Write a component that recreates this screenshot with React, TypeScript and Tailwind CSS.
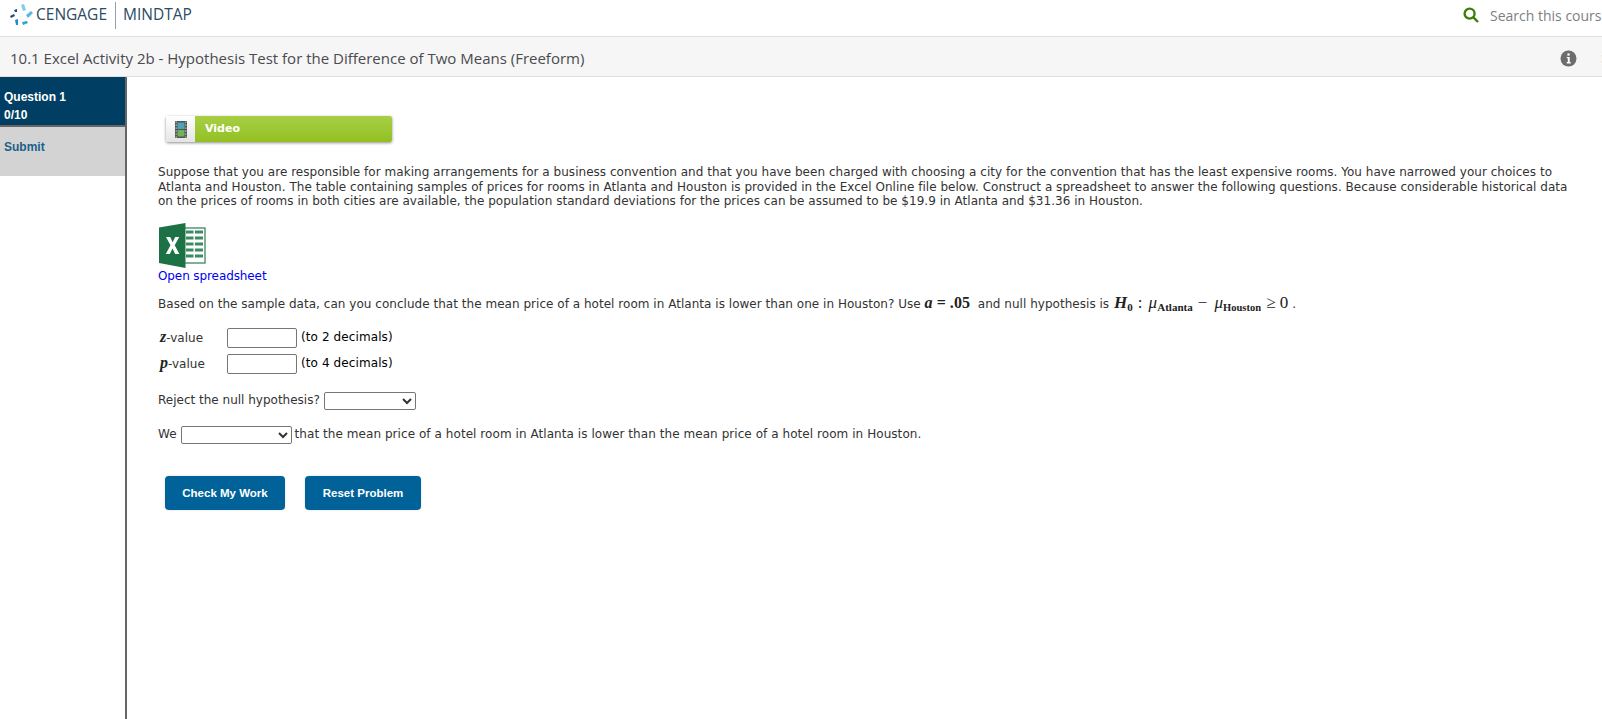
const verdana = "font-['DejaVu_Sans',Verdana,sans-serif]";

function Logo() {
  return (
    <svg width="24" height="22" viewBox="0 0 24 22" className="shrink-0">
      <path d="M11 1l3-1 2 6-3 1z" fill="#7fcdee" />
      <path d="M16 11l5-4 2 2-5 5z" fill="#5ab8e6" />
      <path d="M0 12l4-2 1 2-4 2z" fill="#1c4f77" />
      <path d="M4 6l3-1v3l-2 0z" fill="#1c4f77" />
      <path d="M5 16l3-1v6l-2 0z" fill="#1f8fc9" />
      <path d="M12 18l5-1 1 2-5 2z" fill="#2aa3dc" />
    </svg>
  );
}

function SearchIcon() {
  return (
    <svg width="16" height="16" viewBox="0 0 16 16" fill="none" className="shrink-0">
      <circle cx="6.6" cy="6.6" r="5" stroke="#3f7d0c" strokeWidth="2.4" />
      <path d="M10.4 10.4L15 15" stroke="#3f7d0c" strokeWidth="2.4" />
    </svg>
  );
}

function InfoIcon() {
  return (
    <svg width="17" height="17" viewBox="0 0 17 17" className="shrink-0">
      <circle cx="8.5" cy="8.5" r="8" fill="#6d6d6f" />
      <rect x="7.4" y="3.4" width="2.3" height="2.2" fill="#fff" />
      <path d="M6.8 7h2.9v5h1v1.4H6.8V12h1V8.3h-1z" fill="#fff" />
    </svg>
  );
}

function FilmIcon() {
  return (
    <svg width="12" height="17" viewBox="0 0 12 17">
      <rect x="0" y="0" width="12" height="17" fill="#4f5354" />
      <rect x="2.5" y="1.5" width="7" height="6.5" fill="#4fa3b5" />
      <rect x="2.5" y="9" width="7" height="6.5" fill="#72b455" />
      {[1, 4, 7, 10, 13, 16].map((y) => (
        <g key={y}>
          <rect x="0.6" y={y - 0.5} width="1.2" height="1.2" fill="#cfd4d4" />
          <rect x="10.2" y={y - 0.5} width="1.2" height="1.2" fill="#cfd4d4" />
        </g>
      ))}
    </svg>
  );
}

function ExcelIcon() {
  return (
    <svg width="47" height="45" viewBox="0 0 47 45">
      <rect x="25" y="5" width="21" height="35" fill="#fff" stroke="#2a7d50" strokeWidth="1.2" />
      {[11, 17, 23, 29, 35].map((y) => (
        <rect key={y} x="27" y={y - 3.5} width="17" height="3" fill="#3c8a60" />
      ))}
      <rect x="34.5" y="6" width="1.4" height="33" fill="#fff" />
      <path d="M0 4.5L26.5 0v45L0 40z" fill="#1d7245" />
      <path d="M7 14h4.2l2.5 5.2 2.5-5.2h4l-4.5 8.2 4.7 8.8h-4.2l-2.7-5.5-2.7 5.5H6.8l4.7-8.8z" fill="#fff" />
    </svg>
  );
}

function MathVar({ children }: { children: string }) {
  return <i className="font-['Liberation_Serif',serif] text-[16px] font-bold text-[#222]">{children}</i>;
}

export default function App() {
  return (
    <div className="flex h-[719px] w-[1602px] flex-col overflow-hidden bg-white">
      {/* Top bar */}
      <header className="flex h-[37px] shrink-0 items-center justify-between border-b border-[#dedede] pb-[6px] pl-[10px] font-['Open_Sans',sans-serif]">
        <div className="flex items-center">
          <Logo />
          <span className="ml-[2px] text-[15.5px] text-[#2c4a63]">CENGAGE</span>
          <span className="ml-[8px] mr-[7px] h-[27px] w-px bg-[#8fa0ad]" />
          <span className="text-[15.5px] text-[#2c4a63]">MINDTAP</span>
        </div>
        <div className="flex w-[139px] shrink-0 items-center gap-[11px] overflow-hidden whitespace-nowrap">
          <SearchIcon />
          <span className="text-[14px] text-[#7b7f83]">Search this course</span>
        </div>
      </header>

      {/* Title bar */}
      <div className="flex h-[40px] shrink-0 items-center justify-between overflow-hidden border-b border-[#dedede] bg-[#f6f6f6] pl-[10px] pt-[4px] font-['Open_Sans',sans-serif]">
        <h1 className="text-[15px] font-normal text-[#4a4a4f]">
          10.1 Excel Activity 2b - Hypothesis Test for the Difference of Two Means (Freeform)
        </h1>
        <div className="flex w-[42px] shrink-0 items-center gap-[23px] overflow-hidden">
          <InfoIcon />
          <span className="text-[14px] text-[#555]">✕</span>
        </div>
      </div>

      <div className="flex min-h-0 flex-1">
        {/* Sidebar */}
        <aside className="w-[127px] shrink-0 border-r-2 border-[#666] font-['Liberation_Sans',sans-serif] text-[12px] font-bold">
          <div className="flex h-[50px] flex-col justify-end border-b-2 border-[#666] bg-[#003f63] pb-[1px] pl-[4px] leading-[18px] text-white">
            <div>Question 1</div>
            <div>0/10</div>
          </div>
          <div className="h-[49px] bg-[#d3d3d3] pl-[4px] pt-[11px] text-[#1d5f8a]">Submit</div>
        </aside>

        {/* Question */}
        <main className={`min-w-0 flex-1 pl-[31px] pr-[12px] pt-[39px] text-[12px] leading-[14.5px] text-[#333] ${verdana}`}>
          <div className="ml-[8px] flex h-[26px] w-[226px] items-stretch rounded-[2px] shadow-[0_1px_3px_rgba(0,0,0,0.45)]">
            <div className="flex w-[29px] items-center justify-center bg-gradient-to-b from-white to-[#e4e4e4]">
              <FilmIcon />
            </div>
            <div className="flex flex-1 items-center rounded-r-[2px] bg-gradient-to-b from-[#a8cf45] to-[#93c01f] pl-[10px] text-[11px] font-bold text-white">
              Video
            </div>
          </div>

          <p className="mt-[23px] pr-[18px] tracking-[0.03px]">
            Suppose that you are responsible for making arrangements for a business convention and that you have been charged with choosing a city for the convention that has the least expensive rooms. You have narrowed your choices to Atlanta and Houston. The table containing samples of prices for rooms in Atlanta and Houston is provided in the Excel Online file below. Construct a spreadsheet to answer the following questions. Because considerable historical data on the prices of rooms in both cities are available, the population standard deviations for the prices can be assumed to be $19.9 in Atlanta and $31.36 in Houston.
          </p>

          <div className="ml-[1px] mt-[14px]">
            <ExcelIcon />
          </div>
          <a className="mt-[1px] block text-[#0000ee] tracking-[-0.1px]">Open spreadsheet</a>

          <p className="mt-[13px] flex items-baseline whitespace-pre tracking-[0.03px]">
            Based on the sample data, can you conclude that the mean price of a hotel room in Atlanta is lower than one in Houston? Use <MathVar>a</MathVar>
            <span className="font-['Liberation_Serif',serif] text-[16px] font-bold text-[#222]"> = .05 </span> and null hypothesis is{" "}
            <span className="ml-[1px] font-['Liberation_Serif',serif] text-[17px] text-[#222]">
              <i className="font-bold">H</i>
              <sub className="text-[11px] font-bold">0</sub>
              <span className="ml-[5px] mr-[6px]">:</span>
              <i>μ</i>
              <sub className="text-[11px] font-bold">Atlanta</sub>
              <span className="ml-[5px] mr-[7px]">−</span>
              <i>μ</i>
              <sub className="text-[10.5px] font-bold">Houston</sub>
              <span className="ml-[5px]">≥ 0</span>
            </span>
            <span> .</span>
          </p>

          <div className="mt-[16px] flex flex-col gap-[6px]">
            <div className="flex items-center">
              <span className="w-[69px] pl-[2px]">
                <MathVar>z</MathVar>-value
              </span>
              <input className="h-[20px] w-[70px] rounded-[2px] border border-[#767676] bg-white" />
              <span className="ml-[4px] tracking-[0.1px] text-black">(to 2 decimals)</span>
            </div>
            <div className="flex items-center">
              <span className="w-[69px] pl-[2px]">
                <MathVar>p</MathVar>-value
              </span>
              <input className="h-[20px] w-[70px] rounded-[2px] border border-[#767676] bg-white" />
              <span className="ml-[4px] tracking-[0.1px] text-black">(to 4 decimals)</span>
            </div>
          </div>

          <div className="mt-[18px] flex items-center">
            <span>Reject the null hypothesis?</span>
            <select className="ml-[4px] h-[18px] w-[92px] appearance-auto rounded-[2px] border border-[#767676] bg-white" />
          </div>

          <div className="mt-[16px] flex items-center">
            <span>We</span>
            <select className="ml-[4px] h-[18px] w-[111px] appearance-auto rounded-[2px] border border-[#767676] bg-white" />
            <span className="ml-[3px] tracking-[0.06px]">that the mean price of a hotel room in Atlanta is lower than the mean price of a hotel room in Houston.</span>
          </div>

          <div className="ml-[7px] mt-[32px] flex gap-[20px] font-['Liberation_Sans',sans-serif] text-[11.5px] font-bold text-white">
            <button className="h-[34px] w-[120px] rounded-[4px] bg-[#006298] pt-[1px] shadow-[0_0_2px_rgba(0,0,0,0.2)]">Check My Work</button>
            <button className="h-[34px] w-[116px] rounded-[4px] bg-[#006298] pt-[1px] shadow-[0_0_2px_rgba(0,0,0,0.2)]">Reset Problem</button>
          </div>
        </main>
      </div>
    </div>
  );
}
